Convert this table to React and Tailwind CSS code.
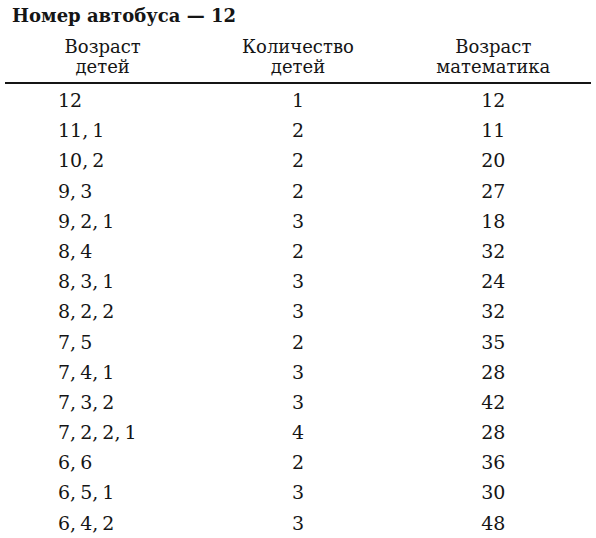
import React from "react";

const rows = [
  ["12", "1", "12"],
  ["11, 1", "2", "11"],
  ["10, 2", "2", "20"],
  ["9, 3", "2", "27"],
  ["9, 2, 1", "3", "18"],
  ["8, 4", "2", "32"],
  ["8, 3, 1", "3", "24"],
  ["8, 2, 2", "3", "32"],
  ["7, 5", "2", "35"],
  ["7, 4, 1", "3", "28"],
  ["7, 3, 2", "3", "42"],
  ["7, 2, 2, 1", "4", "28"],
  ["6, 6", "2", "36"],
  ["6, 5, 1", "3", "30"],
  ["6, 4, 2", "3", "48"],
];

export default function App() {
  return (
    <div className="w-[596px] h-[538px] bg-white text-[#151515] overflow-hidden" style={{ fontFamily: '"DejaVu Serif", serif' }}>
      <div className="pl-[12px] pt-[3px] text-[18px] font-bold leading-[26px]">Номер автобуса — 12</div>
      <div className="mx-[5px] grid grid-cols-3 border-b-[2px] border-[#151515] pt-[8px] pb-[5px] text-[18px] leading-[20px] text-center">
        <div>Возраст<br />детей</div>
        <div>Количество<br />детей</div>
        <div>Возраст<br />математика</div>
      </div>
      <div className="mx-[5px] pt-[1px] text-[19px]">
        {rows.map((r, i) => (
          <div key={i} className="grid grid-cols-3 h-[30.2px] leading-[30px]">
            <div className="pl-[53px] [word-spacing:-2px]">{r[0]}</div>
            <div className="text-center">{r[1]}</div>
            <div className="text-center">{r[2]}</div>
          </div>
        ))}
      </div>
    </div>
  );
}
